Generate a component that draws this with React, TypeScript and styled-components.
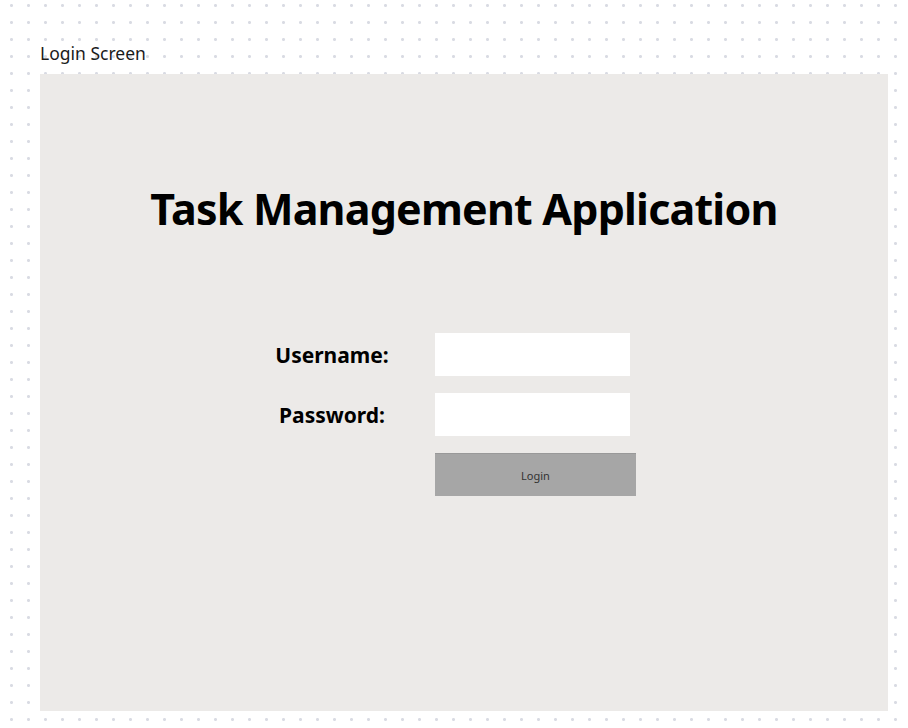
import styled, { createGlobalStyle } from 'styled-components'

const GlobalStyle = createGlobalStyle`
	html,
	body {
		margin: 0;
		padding: 0;
		background-color: #ffffff;
		font-family: 'Noto Sans', 'Open Sans', sans-serif;
	}

	* {
		box-sizing: border-box;
	}
`

const Canvas = styled.div`
	width: 908px;
	height: 728px;
	padding: 42px 0 0 40px;
	background-color: #ffffff;
	background-image: radial-gradient(circle, #d9dbe3 1.3px, transparent 1.6px);
	background-size: 17px 17px;
	background-position: 3px -3px;
`

const FrameLabel = styled.div`
	font-size: 17.5px;
	line-height: 22px;
	color: #1b1b1b;
	height: 32px;
`

const Frame = styled.div`
	width: 848px;
	height: 637px;
	background: #eceae8;
	display: flex;
	flex-direction: column;
	align-items: center;
	padding-top: 105px;
`

const Title = styled.h1`
	margin: 0;
	font-size: 43px;
	line-height: 60px;
	font-weight: 700;
	color: #000;
	letter-spacing: -0.8px;
`

const Form = styled.form`
	align-self: flex-start;
	margin: 94px 0 0 189px;
	display: grid;
	grid-template-columns: 206px 201px;
	row-gap: 17px;
`

const Label = styled.label`
	display: flex;
	align-items: center;
	justify-content: center;
	font-size: 21px;
	font-weight: 700;
	color: #000;
	height: 43px;
`

const Input = styled.input`
	width: 195px;
	height: 43px;
	border: none;
	background: #ffffff;
	outline: none;
	padding: 0 10px;
`

const Button = styled.button`
	grid-column: 2;
	width: 201px;
	height: 43px;
	border: none;
	border-top: 1px solid #999;
	background: #a6a6a6;
	color: #333;
	font-family: 'Noto Sans', 'Open Sans', sans-serif;
	font-size: 11px;
	cursor: pointer;
`

export default function App() {
	return (
		<>
			<GlobalStyle />
			<Canvas>
				<FrameLabel>Login Screen</FrameLabel>
				<Frame>
					<Title>Task Management Application</Title>
					<Form onSubmit={e => e.preventDefault()}>
						<Label htmlFor='username'>Username:</Label>
						<Input id='username' type='text' />
						<Label htmlFor='password'>Password:</Label>
						<Input id='password' type='password' />
						<Button type='submit'>Login</Button>
					</Form>
				</Frame>
			</Canvas>
		</>
	)
}
